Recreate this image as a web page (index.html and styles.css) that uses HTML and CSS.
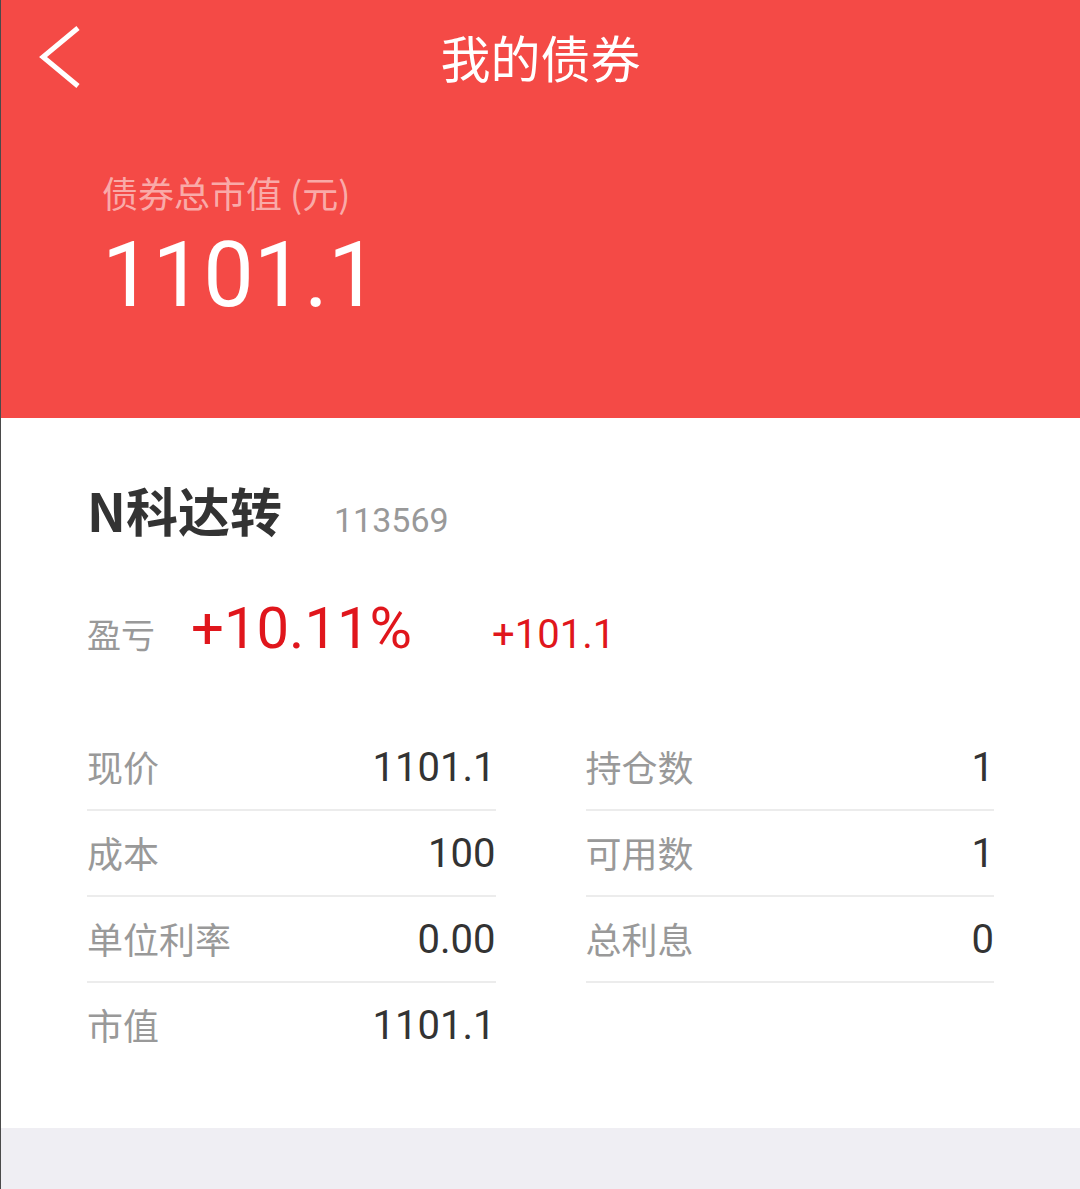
FILE: index.html
```html
<!DOCTYPE html>
<html lang="zh-CN">
<head>
<meta charset="utf-8">
<title>我的债券</title>
<link rel="stylesheet" href="styles.css">
</head>
<body>
<div class="page">
  <header class="hero">
    <nav class="navbar">
      <a class="back" href="#" aria-label="返回">
        <svg width="50" height="70" viewBox="0 0 50 70"><polyline points="42,6 7,35 42,64" fill="none" stroke="#fff" stroke-width="5" stroke-linejoin="miter"/></svg>
      </a>
      <h1 class="nav-title">我的债券</h1>
      <span class="nav-side"></span>
    </nav>
    <div class="summary">
      <div class="summary-label">债券总市值 (元)</div>
      <div class="summary-value">1101.1</div>
    </div>
  </header>

  <main class="card">
    <div class="bond-head">
      <span class="bond-name">N科达转</span>
      <span class="bond-code">113569</span>
    </div>
    <div class="pnl">
      <span class="pnl-label">盈亏</span>
      <span class="pnl-pct">+10.11%</span>
      <span class="pnl-amt">+101.1</span>
    </div>
    <div class="grid">
      <div class="col">
        <div class="row"><span class="k">现价</span><span class="v">1101.1</span></div>
        <div class="row"><span class="k">成本</span><span class="v">100</span></div>
        <div class="row"><span class="k">单位利率</span><span class="v">0.00</span></div>
        <div class="row row-last"><span class="k">市值</span><span class="v">1101.1</span></div>
      </div>
      <div class="col">
        <div class="row"><span class="k">持仓数</span><span class="v">1</span></div>
        <div class="row"><span class="k">可用数</span><span class="v">1</span></div>
        <div class="row"><span class="k">总利息</span><span class="v">0</span></div>
      </div>
    </div>
  </main>
  <div class="footer-space"></div>
</div>
</body>
</html>
```

FILE: styles.css
```css
* { box-sizing: border-box; margin: 0; padding: 0; }
html, body { height: 100%; }
body {
  background: #efeef3;
  font-family: "Noto Sans CJK SC", "Noto Sans", sans-serif;
}
.page {
  min-height: 1189px;
  border-left: 1px solid #4a4a4a;
  background: #efeef3;
}
.hero {
  background: #f44a46;
  height: 418px;
  color: #fff;
}
.navbar {
  height: 118px;
  display: grid;
  grid-template-columns: 1fr auto 1fr;
  align-items: start;
}
.back {
  display: block;
  width: 50px;
  height: 70px;
  margin-left: 35px;
  margin-top: 22px;
}
.back svg { display: block; }
.nav-title {
  font-weight: 400;
  font-size: 50px;
  line-height: 112px;
  color: #fff;
  letter-spacing: 0;
}
.summary {
  padding-left: 101px;
  padding-top: 50px;
}
.summary-label {
  font-size: 36px;
  line-height: 48px;
  color: rgba(255, 255, 255, 0.55);
}
.summary-value {
  font-family: Roboto, "Noto Sans", sans-serif;
  font-size: 90px;
  line-height: 90px;
  margin-top: 15px;
  color: #fff;
}
.card {
  background: #fff;
  padding: 62px 86px 59px 86px;
}
.bond-head {
  display: flex;
  align-items: baseline;
  height: 60px;
}
.bond-name {
  font-size: 52px;
  font-weight: 700;
  line-height: 60px;
  color: #333;
}
.bond-code {
  font-family: Roboto, sans-serif;
  font-size: 34px;
  color: #999;
  margin-left: 52px;
}
.pnl {
  display: flex;
  align-items: baseline;
  height: 70px;
  margin-top: 53px;
}
.pnl-label {
  font-size: 34px;
  color: #999;
}
.pnl-pct {
  font-family: Roboto, sans-serif;
  font-size: 58px;
  line-height: 70px;
  color: #e0161c;
  margin-left: 36px;
}
.pnl-amt {
  font-family: Roboto, sans-serif;
  font-size: 40px;
  color: #e0161c;
  margin-left: 80px;
}
.grid {
  margin-top: 62px;
  display: grid;
  grid-template-columns: 1fr 1fr;
  column-gap: 90px;
}
.row {
  height: 86px;
  border-bottom: 2px solid #ececec;
  display: flex;
  justify-content: space-between;
  align-items: center;
}
.row-last { border-bottom-color: transparent; }
.k {
  font-size: 36px;
  color: #999;
  margin-top: -3px;
}
.v {
  font-family: Roboto, sans-serif;
  font-size: 40px;
  color: #333;
}
.footer-space {
  height: 61px;
}
```
